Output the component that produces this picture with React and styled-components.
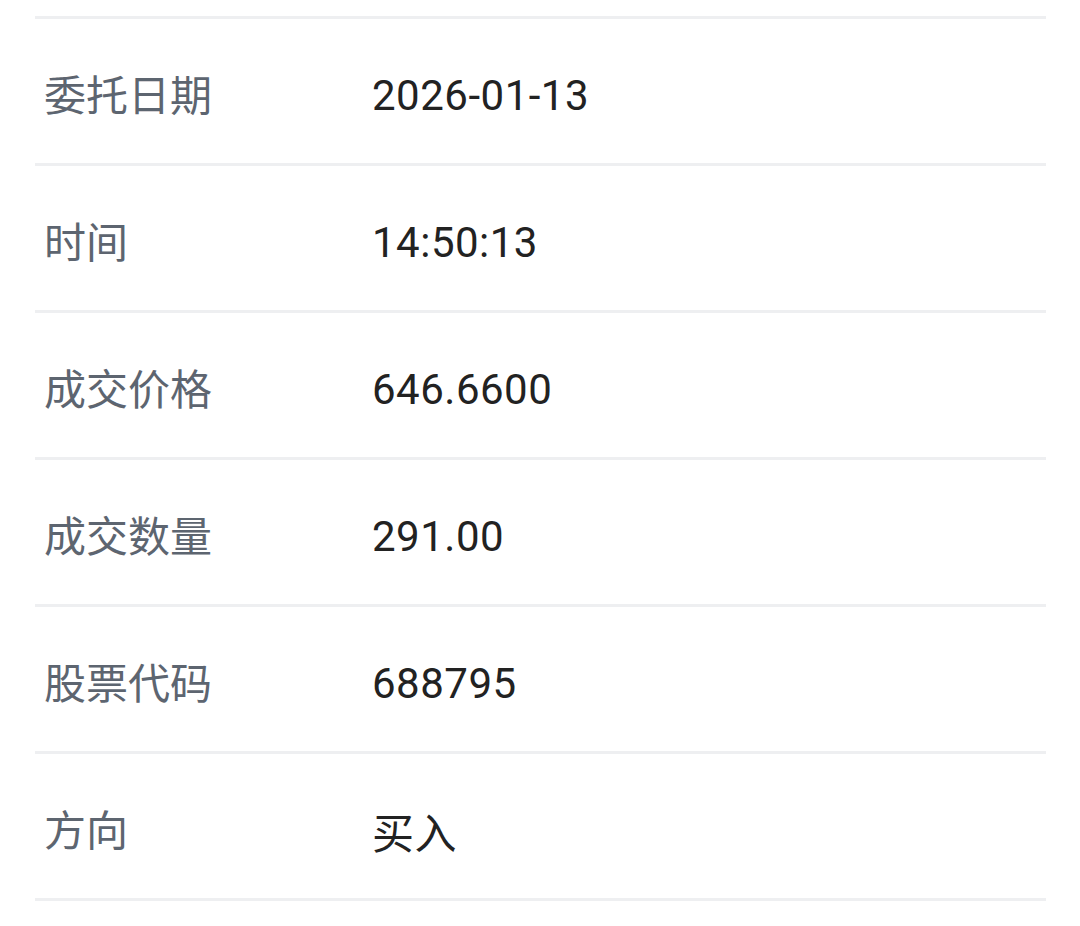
import React from 'react';
import styled, { createGlobalStyle } from 'styled-components';

const GlobalStyle = createGlobalStyle`
  html, body {
    margin: 0;
    padding: 0;
    background: #fff;
  }
`;

const List = styled.div`
  margin: 0 34px 0 35px;
  padding-top: 16px;
  font-family: Roboto, "Noto Sans CJK SC", sans-serif;
`;

const Row = styled.div`
  display: flex;
  align-items: center;
  height: 144px;
  border-top: 3px solid #eeeff1;

  &:last-child {
    border-bottom: 3px solid #eeeff1;
  }
`;

const Label = styled.div`
  width: 328px;
  padding-left: 9px;
  padding-top: 2px;
  font-size: 42px;
  color: #5d6570;
`;

const Value = styled.div`
  padding-top: 8px;
  font-size: 42px;
  letter-spacing: 0.5px;
  color: #222;
`;

const rows = [
  ['委托日期', '2026-01-13'],
  ['时间', '14:50:13'],
  ['成交价格', '646.6600'],
  ['成交数量', '291.00'],
  ['股票代码', '688795'],
  ['方向', '买入'],
];

const App = () => {
  return (
    <>
      <GlobalStyle />
      <List>
        {rows.map(([label, value]) => (
          <Row key={label}>
            <Label>{label}</Label>
            <Value>{value}</Value>
          </Row>
        ))}
      </List>
    </>
  );
};

export default App;
